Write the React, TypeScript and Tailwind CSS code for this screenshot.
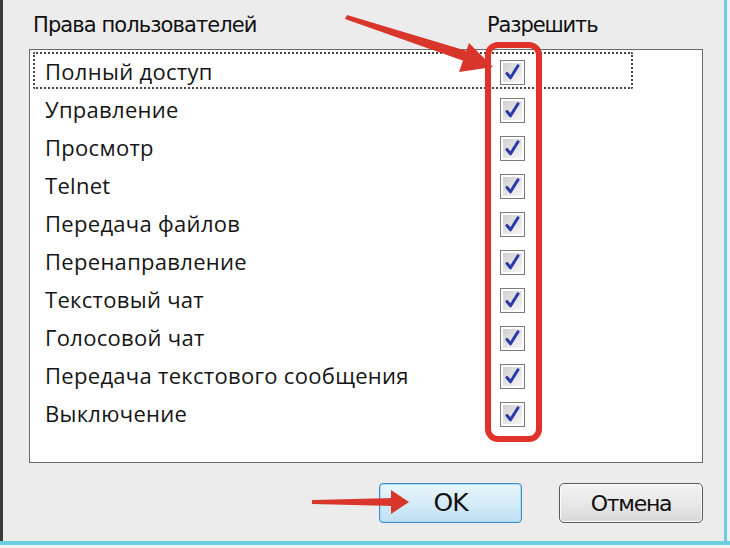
import React from "react";

const rows = [
  "Полный доступ",
  "Управление",
  "Просмотр",
  "Telnet",
  "Передача файлов",
  "Перенаправление",
  "Текстовый чат",
  "Голосовой чат",
  "Передача текстового сообщения",
  "Выключение",
];

function CheckBox() {
  return (
    <div className="w-[25px] h-[25px] border border-[#7b7b7b] bg-white p-[2px]">
      <div className="w-full h-full bg-gradient-to-br from-[#d0d0d0] to-[#f6f6f6] flex items-center justify-center">
        <svg width="17" height="17" viewBox="0 0 17 17">
          <path
            d="M3 9.5 L6.5 13.8 L14 1.8"
            fill="none"
            stroke="#2b3aa8"
            strokeWidth="3"
            strokeLinecap="round"
            strokeLinejoin="round"
          />
        </svg>
      </div>
    </div>
  );
}

export default function App() {
  return (
    <div
      className="relative w-[730px] h-[548px] bg-[#ececec] overflow-hidden flex flex-col"
      style={{ fontFamily: "'Open Sans', 'Noto Sans', sans-serif" }}
    >
      <div className="absolute left-0 top-0 bottom-0 w-[3px] bg-[#3a3a3a]" />
      <div className="absolute right-0 top-0 bottom-0 w-[6px] bg-[#f0f0f0] border-l-[3px] border-[#6bcfe0]" />
      <div className="absolute left-0 right-0 top-[541px] h-[4px] bg-[#6bcfe0]" />
      <div className="absolute left-0 right-0 top-[545px] h-[3px] bg-[#f4f4f4]" />

      {/* header */}
      <div
        className="flex h-[49px] pt-[10px] text-[21px] text-[#111]"
        style={{ fontFamily: "'DejaVu Sans', sans-serif" }}
      >
        <div className="pl-[33px] w-[487px] tracking-[-0.9px]">Права пользователей</div>
        <div className="tracking-[-1.1px]">Разрешить</div>
      </div>

      {/* list box */}
      <div className="ml-[29px] w-[674px] h-[414px] border border-[#6b6b6b] bg-white pt-[3px]">
        {rows.map((r, i) => (
          <div key={r} className="relative flex items-center h-[38px]">
            {i === 0 && (
              <div className="absolute left-[3px] top-[-1px] w-[600px] h-[37px] border-2 border-dotted border-[#444] rounded-[2px]" />
            )}
            <div className="pl-[15px] w-[470px] text-[22px] tracking-[0.3px] text-[#151515] leading-none pb-[3px]">{r}</div>
            <CheckBox />
          </div>
        ))}
      </div>

      {/* buttons */}
      <div className="flex mt-[20px] pl-[379px] gap-[37px]">
        <div
          className="w-[143px] h-[40px] rounded-[4px] border border-[#3d8fcf] shadow-[inset_0_0_0_1px_#a8dcf5] bg-gradient-to-b from-[#e8f5fc] via-[#d6ecf8] to-[#bedff2] flex items-center justify-center text-[25px] text-[#111]"
          style={{ fontFamily: "'DejaVu Sans', sans-serif" }}
        >
          <span className="tracking-[-1px]">OK</span>
        </div>
        <div
          className="w-[144px] h-[40px] rounded-[5px] border-[1.5px] border-[#5a5a5a] shadow-[inset_0_0_0_1px_#fafafa] bg-gradient-to-b from-[#f3f3f3] via-[#e8e8e8] to-[#d8d8d8] flex items-center justify-center text-[22px] text-[#111]"
          style={{ fontFamily: "'DejaVu Sans', sans-serif" }}
        >
          <span className="tracking-[-1.3px]">Отмена</span>
        </div>
      </div>

      {/* red highlight */}
      <div className="absolute left-[485px] top-[42px] w-[57px] h-[400px] border-[6px] border-[#e0322a] rounded-[13px]" />

      {/* arrows */}
      <svg className="absolute left-0 top-0 pointer-events-none" width="730" height="548">
        <path d="M347 15 L467 51 L464 61 L345 19 Z" fill="#d8362b" />
        <polygon points="493,67 459,72 469,43" fill="#d8362b" />
        <path d="M312 500 L394 498 L394 506 L312 504 Z" fill="#d8362b" />
        <polygon points="409,502 391,490 391,514" fill="#d8362b" />
      </svg>
    </div>
  );
}
